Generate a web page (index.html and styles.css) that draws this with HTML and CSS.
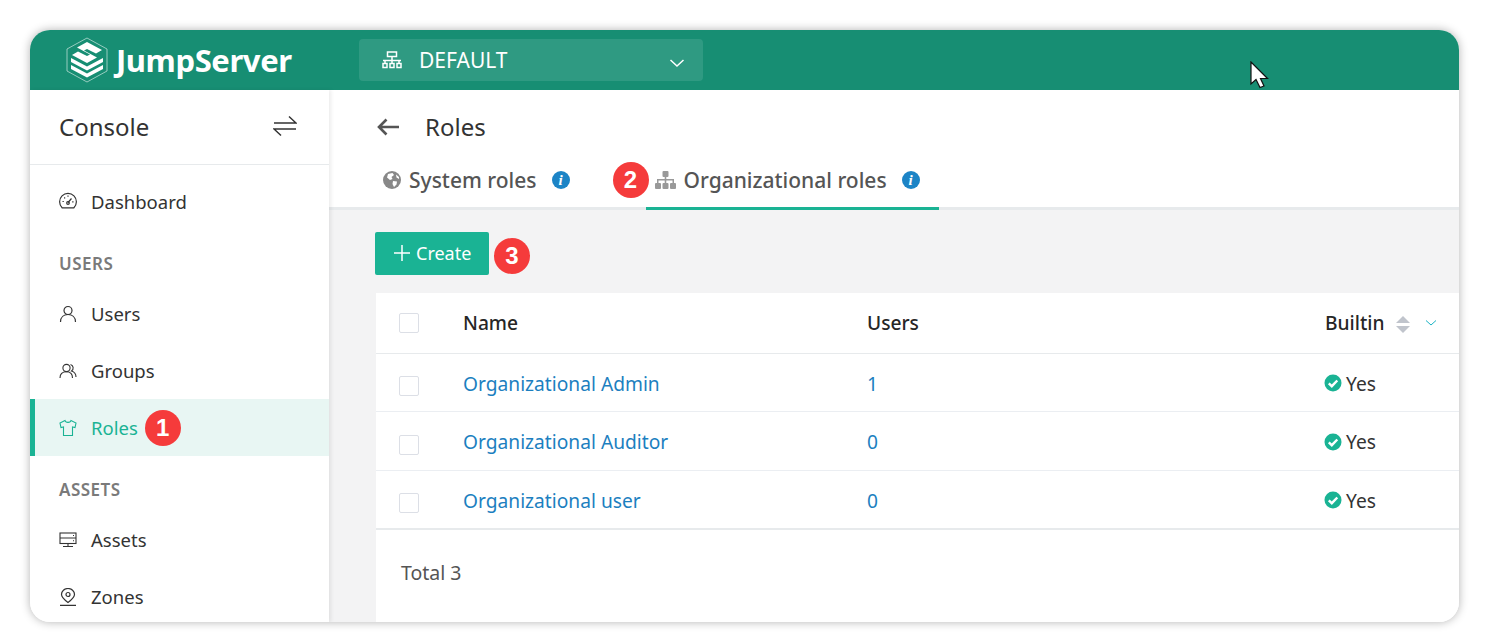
FILE: index.html
```html
<!DOCTYPE html>
<html lang="en">
<head>
    <meta charset="UTF-8">
    <title>JumpServer - Roles</title>
    <link rel="stylesheet" href="styles.css">
</head>
<body>
    <div class="window">
        <header class="topbar">
            <div class="logo">
                <svg class="logo-mark" width="42" height="46" viewBox="0 0 42 46">
                    <path d="M21 1 L41 12 V34 L21 45 L1 34 V12 Z" fill="none" stroke="#fff" stroke-opacity=".55" stroke-width="1"/>
                    <path d="M21 5 L36 13 L30 16.500 L21 12 L18 13.500 L31 20.500 L21 26 L6 18 L12 14.500 L21 19 L24 17.500 L11 10.500 Z" fill="#fff"/>
                    <path d="M5 21 L21 29.500 L37 21 V25 L21 33.500 L5 25 Z" fill="#fff"/>
                    <path d="M5 28 L21 36.500 L37 28 V32 L21 40.500 L5 32 Z" fill="#fff"/>
                </svg>
                <span class="logo-text">JumpServer</span>
            </div>
            <div class="org-select">
                <svg class="org-icon" width="20" height="18" viewBox="0 0 20 18" fill="none" stroke="#fff" stroke-width="1.500">
                    <rect x="5.500" y="1" width="9" height="4.500"/>
                    <path d="M1 9.500 H19 M10 5.500 V12 M3 9.500 V12 M17 9.500 V12"/>
                    <rect x="1" y="12.500" width="4" height="4"/>
                    <rect x="8" y="12.500" width="4" height="4"/>
                    <rect x="15" y="12.500" width="4" height="4"/>
                </svg>
                <span class="org-name">DEFAULT</span>
                <svg class="org-caret" width="16" height="10" viewBox="0 0 16 10" fill="none" stroke="#fff" stroke-width="1.500">
                    <path d="M1.500 2 L8 8 L14.500 2"/>
                </svg>
            </div>
        </header>

        <div class="layout">
            <aside class="sidebar">
                <div class="sidebar-head">
                    <span>Console</span>
                    <svg width="24" height="22" viewBox="0 0 24 22" fill="none" stroke="#333" stroke-width="1.500">
                        <path d="M1 8 H23 L16 1.500"/>
                        <path d="M23 14 H1 L8 20.500"/>
                    </svg>
                </div>
                <nav class="menu">
                    <a class="menu-item">
                        <svg class="menu-icon icon-up" viewBox="0 0 18 18" fill="none" stroke="#333" stroke-width="1.200">
                            <path d="M3.100 15.800 A8.400 8.400 0 1 1 14.900 15.800 Z"/>
                            <path d="M9 10.500 L12.500 6.500 M3.500 9.500 H4.800 M13.200 9.800 H14.500 M9 3.500 V4.800 M5.200 5.500 L6.100 6.400"/>
                            <circle cx="9" cy="11" r="1.300"/>
                        </svg>
                        Dashboard
                    </a>
                    <div class="menu-title">USERS</div>
                    <a class="menu-item">
                        <svg class="menu-icon" viewBox="0 0 18 18" fill="none" stroke="#333" stroke-width="1.200">
                            <circle cx="9" cy="5.500" r="4"/>
                            <path d="M1.500 17 C1.500 12 5 9.500 9 9.500 C13 9.500 16.500 12 16.500 17"/>
                        </svg>
                        Users
                    </a>
                    <a class="menu-item">
                        <svg class="menu-icon" viewBox="0 0 18 18" fill="none" stroke="#333" stroke-width="1.100">
                            <circle cx="7.500" cy="6" r="3.600"/>
                            <path d="M1 16 C1 12 3.800 9.800 7.500 9.800 C11 9.800 13.500 12 13.500 16"/>
                            <path d="M11.500 2.500 A3.600 3.600 0 0 1 12.500 9 C15 9.800 17 12 17 15"/>
                        </svg>
                        Groups
                    </a>
                    <a class="menu-item active">
                        <svg class="menu-icon" viewBox="0 0 18 18" fill="none" stroke="#1ab394" stroke-width="1.100">
                            <path d="M6 1.500 L1 4 L2 8.500 L4.500 8 V16.500 H13.500 V8 L16 8.500 L17 4 L12 1.500 C11.500 4 6.500 4 6 1.500 Z"/>
                        </svg>
                        Roles
                        <span class="step step-inline">1</span>
                    </a>
                    <div class="menu-title">ASSETS</div>
                    <a class="menu-item">
                        <svg class="menu-icon" viewBox="0 0 18 18" fill="none" stroke="#333" stroke-width="1.100">
                            <rect x="1" y="2" width="16" height="10.500"/>
                            <path d="M1 7 H17 M9 12.500 V15.500 M4 15.500 H14"/>
                            <path d="M14 4.500 H15 M14 9.700 H15"/>
                        </svg>
                        Assets
                    </a>
                    <a class="menu-item">
                        <svg class="menu-icon" viewBox="0 0 18 18" fill="none" stroke="#333" stroke-width="1.200">
                            <path d="M9 14.500 C5 11.500 2.500 9 2.500 6.500 A6.500 6 0 0 1 15.500 6.500 C15.500 9 13 11.500 9 14.500 Z"/>
                            <circle cx="9" cy="6.500" r="2"/>
                            <path d="M1 17.300 H17"/>
                        </svg>
                        Zones
                    </a>
                </nav>
            </aside>

            <main class="content">
                <div class="page-head">
                    <div class="page-title">
                        <svg width="23" height="18" viewBox="0 0 23 18" fill="none" stroke="#555" stroke-width="2.600">
                            <path d="M22 9 H2 M9.500 1.500 L2 9 L9.500 16.500"/>
                        </svg>
                        <span>Roles</span>
                    </div>
                    <div class="tabs">
                        <div class="tab tab-system">
                            <svg class="tab-icon" width="18" height="18" viewBox="0 0 18 18">
                                <circle cx="9" cy="9" r="9" fill="#888"/>
                                <path d="M5 3 L9.500 2 L11 4 L8.500 6 L9.500 8 L7 9 L4 6.500 Z M10 10 L14 10.500 L13.500 13.500 L11 16 L9.500 13 Z M13 3.500 L16 6 L16 8 L13.500 6.500 Z" fill="#fff"/>
                            </svg>
                            System roles
                            <span class="info">i</span>
                        </div>
                        <span class="step step-tab">2</span>
                        <div class="tab tab-active">
                            <svg class="tab-icon" width="21" height="18" viewBox="0 0 21 18" fill="#999">
                                <rect x="7.500" y="0" width="6" height="6" rx="1"/>
                                <rect x="0" y="12" width="6" height="6" rx="1"/>
                                <rect x="7.500" y="12" width="6" height="6" rx="1"/>
                                <rect x="15" y="12" width="6" height="6" rx="1"/>
                                <path d="M9.700 5 H11.300 V8 H19 V12 H17.500 V9.500 H11.300 V12 H9.700 V9.500 H3.500 V12 H2 V8 H9.700 Z"/>
                            </svg>
                            Organizational roles
                            <span class="info">i</span>
                        </div>
                    </div>
                </div>

                <div class="page-body">
                    <div class="actions">
                        <button class="btn-create">
                            <svg width="16" height="16" viewBox="0 0 16 16" stroke="#fff" stroke-width="1.500"><path d="M8 0 V16 M0 8 H16"/></svg>
                            Create
                        </button>
                        <span class="step">3</span>
                    </div>

                    <div class="card">
                        <table class="roles-table">
                            <colgroup>
                                <col class="col-check">
                                <col class="col-name">
                                <col class="col-users">
                                <col>
                            </colgroup>
                            <thead>
                                <tr>
                                    <th><span class="checkbox"></span></th>
                                    <th>Name</th>
                                    <th>Users</th>
                                    <th>
                                        <div class="th-builtin">
                                            Builtin
                                            <span class="sort"><i class="sort-up"></i><i class="sort-down"></i></span>
                                            <svg class="filter" width="12" height="8" viewBox="0 0 12 8" fill="none" stroke="#1ab3c4" stroke-width="1"><path d="M1 1.500 L6 6 L11 1.500"/></svg>
                                        </div>
                                    </th>
                                </tr>
                            </thead>
                            <tbody>
                                <tr>
                                    <td><span class="checkbox row-check"></span></td>
                                    <td><a class="link">Organizational Admin</a></td>
                                    <td><a class="link">1</a></td>
                                    <td><span class="yes"><svg width="18" height="18" viewBox="0 0 18 18"><circle cx="9" cy="9" r="8.500" fill="#1ab394"/><path d="M4.800 9.300 L7.800 12.200 L13.300 6.500" fill="none" stroke="#fff" stroke-width="2.400"/></svg>Yes</span></td>
                                </tr>
                                <tr>
                                    <td><span class="checkbox row-check"></span></td>
                                    <td><a class="link">Organizational Auditor</a></td>
                                    <td><a class="link">0</a></td>
                                    <td><span class="yes"><svg width="18" height="18" viewBox="0 0 18 18"><circle cx="9" cy="9" r="8.500" fill="#1ab394"/><path d="M4.800 9.300 L7.800 12.200 L13.300 6.500" fill="none" stroke="#fff" stroke-width="2.400"/></svg>Yes</span></td>
                                </tr>
                                <tr>
                                    <td><span class="checkbox row-check"></span></td>
                                    <td><a class="link">Organizational user</a></td>
                                    <td><a class="link">0</a></td>
                                    <td><span class="yes"><svg width="18" height="18" viewBox="0 0 18 18"><circle cx="9" cy="9" r="8.500" fill="#1ab394"/><path d="M4.800 9.300 L7.800 12.200 L13.300 6.500" fill="none" stroke="#fff" stroke-width="2.400"/></svg>Yes</span></td>
                                </tr>
                            </tbody>
                        </table>
                        <div class="total">Total 3</div>
                    </div>
                </div>
            </main>
        </div>

        <svg class="cursor" width="20" height="28" viewBox="0 0 20 28">
            <path d="M1 1 V23 L6 18.500 L10 26.500 L14 25 L10.500 17.500 L17.500 17.500 Z" fill="#fff" stroke="#111" stroke-width="1.200"/>
        </svg>
    </div>
</body>
</html>
```

FILE: styles.css
```css
* {
    box-sizing: border-box;
}

body {
    margin: 0;
    height: 642px;
    padding: 30px 30px 20px;
    overflow: hidden;
    background-color: white;
    font-family: "Noto Sans", "Open Sans", sans-serif;
    color: #333;
}

.window {
    position: relative;
    height: 592px;
    border-radius: 20px;
    overflow: hidden;
    box-shadow: 0 0 10px rgba(0,0,0,0.3);
}

.topbar {
    display: flex;
    align-items: center;
    height: 60px;
    background-color: #178e73;
    color: white;
}

.logo {
    display: flex;
    align-items: center;
    width: 329px;
    padding-left: 36px;
}

.logo-mark {
    flex: none;
}

.logo-text {
    margin-left: 8px;
    font-size: 31px;
    font-weight: 700;
    letter-spacing: -0.4px;
    line-height: 60px;
}

.org-select {
    display: flex;
    align-items: center;
    width: 344px;
    height: 42px;
    padding: 0 18px 0 23px;
    border-radius: 4px;
    background-color: #2f9a82;
}

.org-name {
    margin-left: 17px;
    font-size: 21px;
    flex: 1;
}

.org-caret {
    margin-top: 6px;
}

.layout {
    display: flex;
    height: 532px;
}

.sidebar {
    width: 299px;
    flex: none;
    background-color: white;
    box-shadow: 2px 0 4px rgba(0,0,0,0.08);
    position: relative;
    z-index: 1;
}

.sidebar-head {
    display: flex;
    justify-content: space-between;
    align-items: center;
    height: 75px;
    padding: 0 32px 2px 29px;
    border-bottom: 1px solid #e7eaec;
    font-size: 24px;
    color: #333;
}

.menu {
    padding-top: 8px;
}

.menu-item {
    display: flex;
    align-items: center;
    height: 57px;
    padding-left: 29px;
    font-size: 18.500px;
    color: #333;
}

.menu-icon {
    width: 18px;
    height: 18px;
    margin-right: 14px;
    flex: none;
}

.icon-up {
    margin-bottom: 2px;
}

.menu-item.active {
    padding-left: 24px;
    border-left: 5px solid #1ab394;
    background-color: #e8f6f3;
    color: #1ab394;
}

.menu-title {
    height: 55px;
    padding: 24px 0 0 29px;
    font-size: 17px;
    font-weight: 600;
    letter-spacing: 0.5px;
    line-height: 20px;
    color: #7a7a7a;
}

.step {
    display: inline-flex;
    align-items: center;
    justify-content: center;
    width: 36px;
    height: 36px;
    flex: none;
    border-radius: 50%;
    background-color: #f53b3b;
    color: white;
    font-family: "Liberation Sans", sans-serif;
    font-size: 24px;
    font-weight: 700;
}

.step-inline {
    margin-left: 7px;
}

.step-tab {
    margin-left: 43px;
    margin-bottom: 15px;
}

.content {
    flex: 1;
    min-width: 0;
    background-color: #f3f3f4;
}

.page-head {
    height: 120px;
    border-bottom: 3px solid #e7eaec;
    background-color: white;
}

.page-title {
    display: flex;
    align-items: center;
    height: 75px;
    padding: 0 0 2px 48px;
    font-size: 24px;
    color: #333;
}

.page-title span {
    margin-left: 25px;
}

.tabs {
    display: flex;
    align-items: center;
    height: 45px;
    padding-left: 54px;
}

.tab {
    display: flex;
    align-items: center;
    height: 45px;
    font-size: 21px;
    font-weight: 500;
    color: #555;
}

.tab-icon {
    margin-right: 8px;
}

.tab-system {
    padding-bottom: 15px;
}

.tab-active {
    margin-left: -3px;
    width: 293px;
    padding: 0 0 12px 9px;
    border-bottom: 3px solid #1ab394;
}

.info {
    display: inline-flex;
    align-items: center;
    justify-content: center;
    width: 18px;
    height: 18px;
    margin-left: 15px;
    border-radius: 50%;
    background-color: #1c84c6;
    color: white;
    font-family: "Liberation Serif", serif;
    font-size: 15px;
    font-weight: 700;
    font-style: italic;
}

.page-body {
    padding: 22px 0 0 46px;
}

.actions {
    display: flex;
    align-items: center;
    height: 43px;
    gap: 5px;
}

.btn-create {
    display: flex;
    align-items: center;
    gap: 6px;
    width: 114px;
    height: 43px;
    padding: 0 0 2px 19px;
    border: none;
    border-radius: 2px;
    background-color: #1ab394;
    color: white;
    font-family: inherit;
    font-size: 18px;
}

.actions .step {
    margin-top: 4px;
}

.card {
    height: 340px;
    margin: 18px 0 0 1px;
    background-color: white;
}

.roles-table {
    width: 100%;
    border-collapse: collapse;
    table-layout: fixed;
    border-bottom: 2px solid #e7eaec;
}

.col-check {
    width: 87px;
}

.col-name {
    width: 404px;
}

.col-users {
    width: 458px;
}

.roles-table th {
    height: 60px;
    padding: 0;
    text-align: left;
    font-size: 19.200px;
    font-weight: 500;
    color: #262626;
    border-bottom: 1px solid #e7eaec;
}

.roles-table td {
    height: 58.500px;
    padding: 2px 0 0;
    font-size: 19.200px;
    border-bottom: 1px solid #ebeef2;
}

.roles-table tr:last-child td {
    border-bottom: none;
}

.checkbox {
    display: block;
    width: 20px;
    height: 20px;
    margin: 0 0 0 23px;
    border: 1px solid #dcdfe6;
    border-radius: 2px;
    background-color: white;
}

.row-check {
    margin-top: 6px;
}

.link {
    color: #1c7fc0;
}

.th-builtin {
    display: flex;
    align-items: center;
}

.sort {
    display: flex;
    flex-direction: column;
    gap: 3px;
    margin: 3px 0 0 11px;
}

.sort-up {
    width: 0;
    height: 0;
    border-left: 7px solid transparent;
    border-right: 7px solid transparent;
    border-bottom: 7px solid #c0c4cc;
}

.sort-down {
    width: 0;
    height: 0;
    border-left: 7px solid transparent;
    border-right: 7px solid transparent;
    border-top: 7px solid #c0c4cc;
}

.filter {
    margin-left: 15px;
    margin-bottom: 0;
}

.yes {
    display: flex;
    align-items: center;
    gap: 4px;
    margin-left: -1px;
    color: #333;
}

.total {
    padding: 29px 0 0 25px;
    font-size: 19.500px;
    color: #555;
}

.cursor {
    position: absolute;
    left: 1220px;
    top: 31px;
}
```
